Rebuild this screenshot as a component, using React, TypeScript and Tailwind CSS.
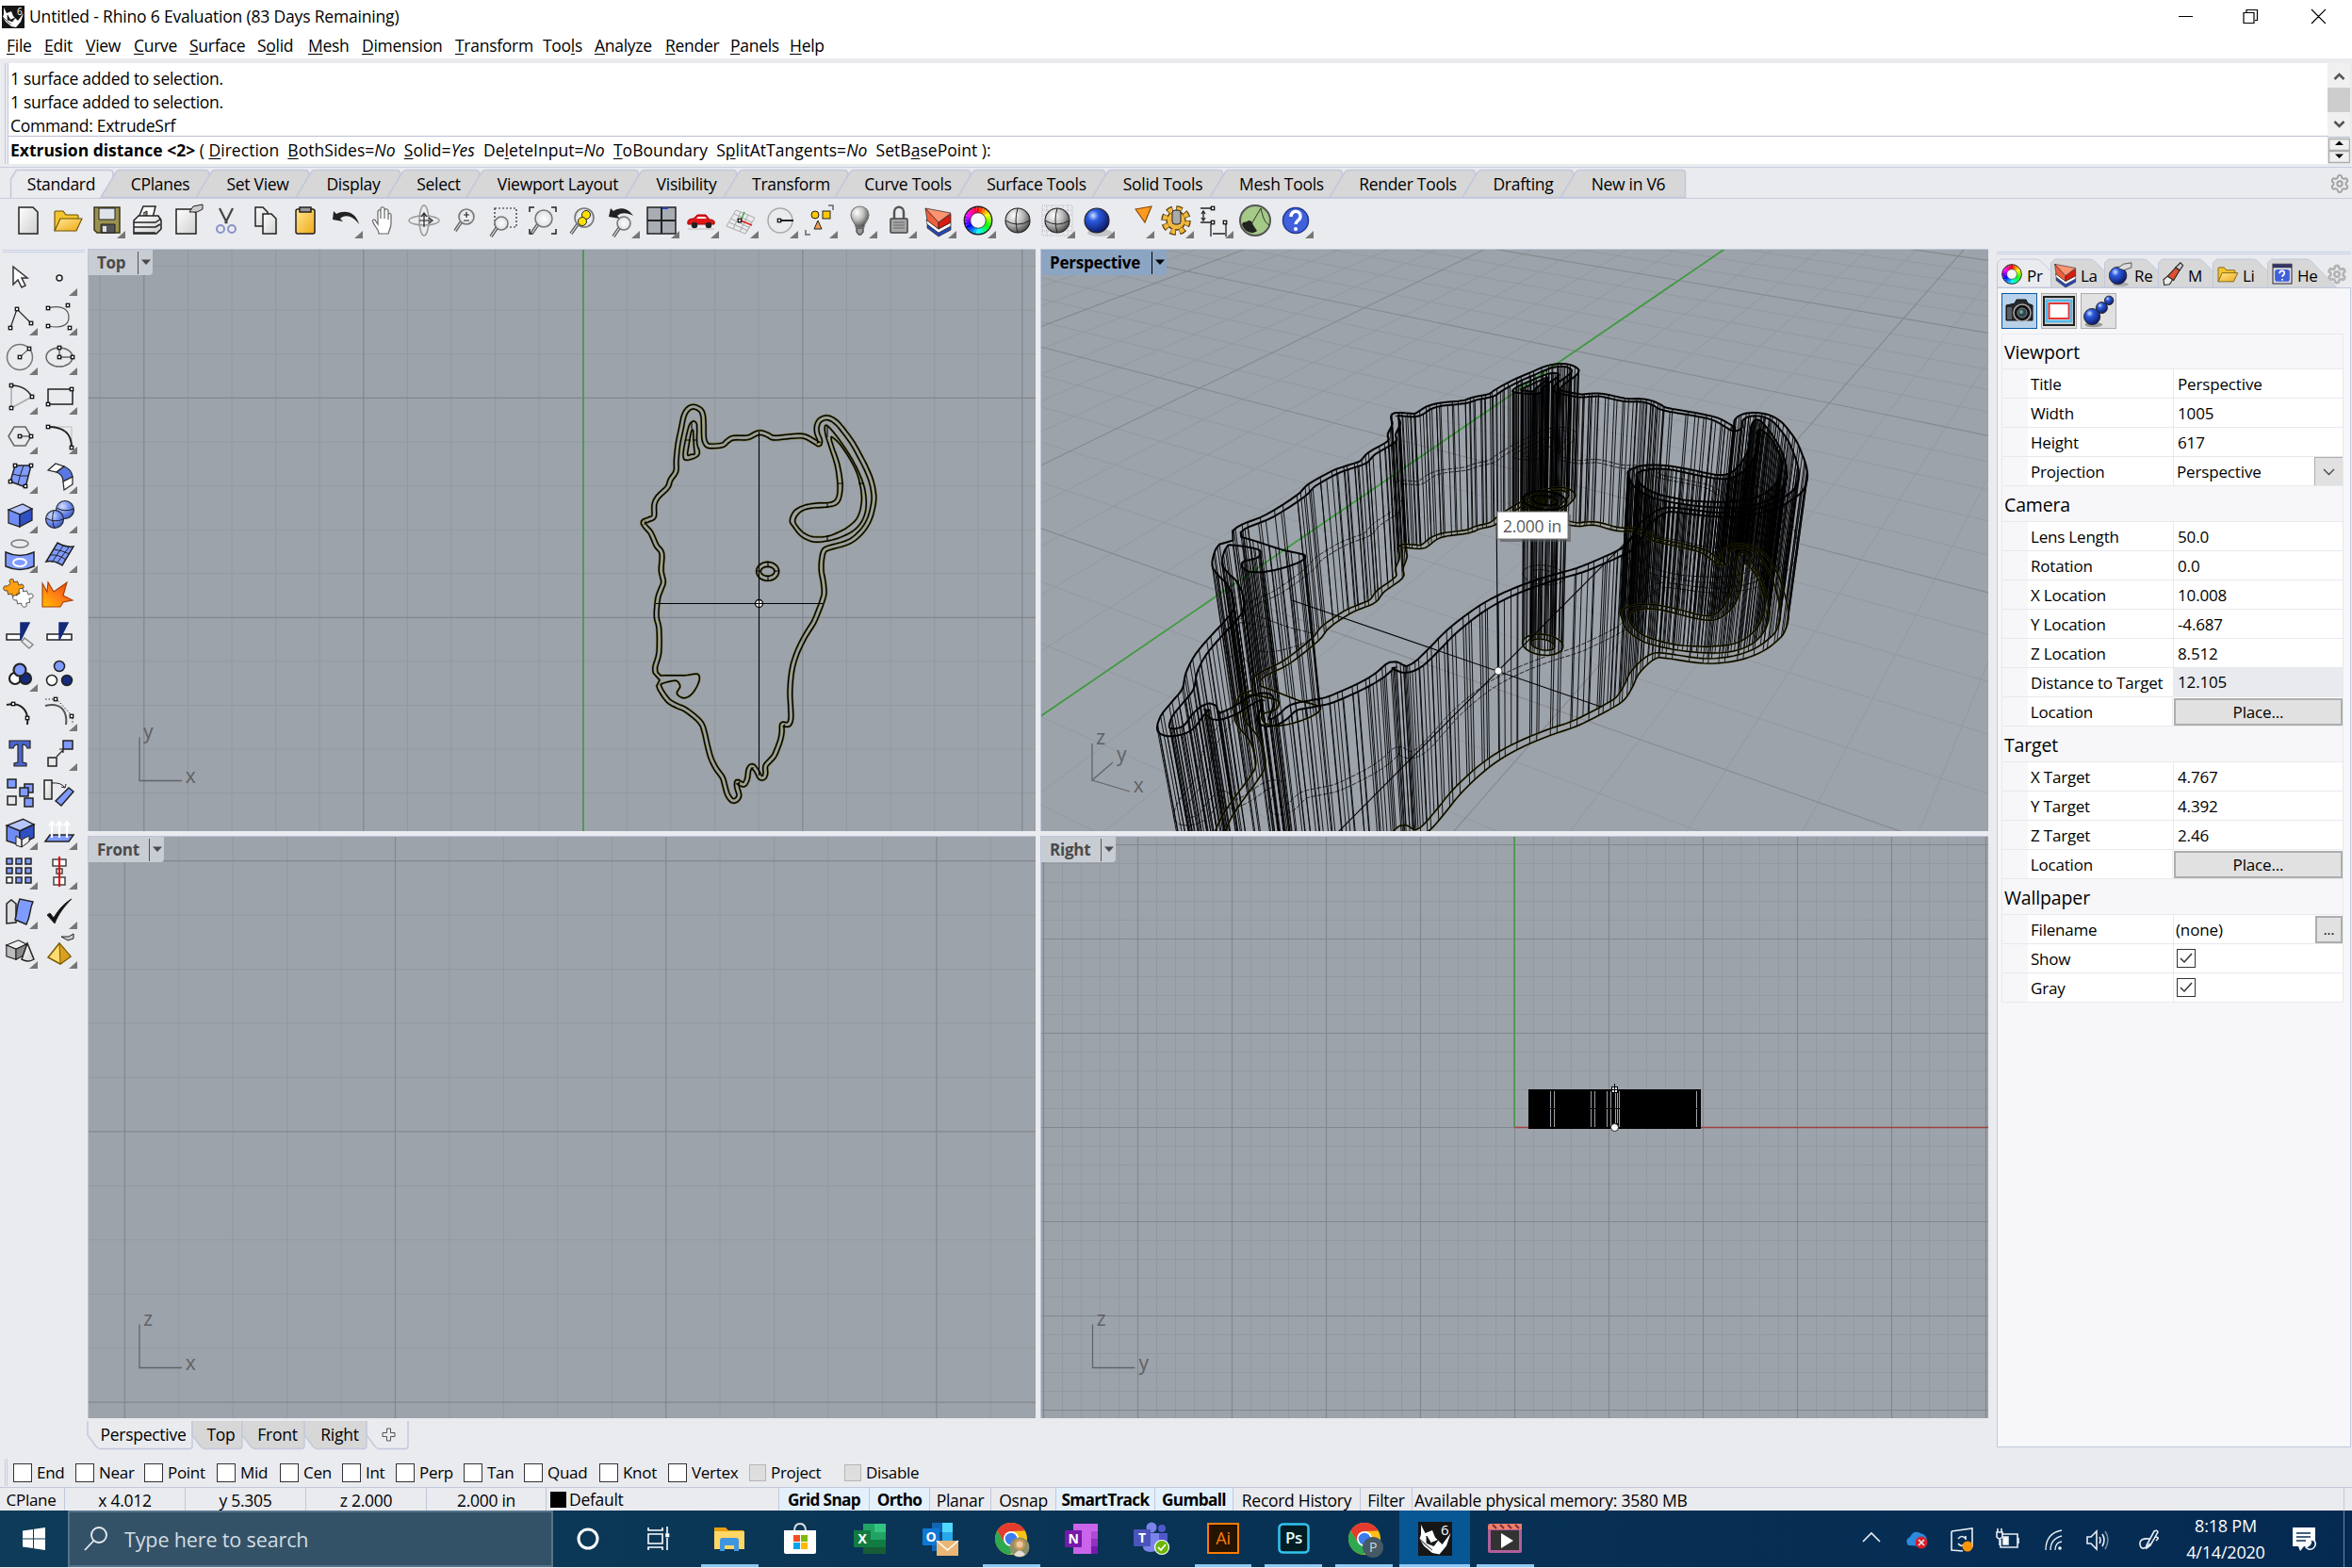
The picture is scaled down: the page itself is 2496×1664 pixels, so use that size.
import React from "react";
import { Settings } from "lucide-react";

type P2 = [number, number];
type P3 = [number, number, number];

/* ---------- outline geometry ---------- */

const OUTLINE: P2[] = [
  [237, 985], [245, 1003], [268, 1034], [295, 1050], [320, 1061], [350, 1083], [373, 1107], [383, 1135], [392, 1175],
  [403, 1215], [420, 1250], [440, 1278], [448, 1305], [456, 1332], [470, 1351], [484, 1350], [493, 1335], [486, 1308],
  [487, 1292], [498, 1298], [510, 1300], [519, 1282], [524, 1252], [535, 1242], [548, 1256], [560, 1278], [572, 1278],
  [577, 1265], [577, 1242], [590, 1226], [604, 1210], [614, 1188], [624, 1160], [629, 1135], [630, 1110], [642, 1110],
  [652, 1108], [658, 1090], [657, 1050], [655, 1010], [658, 960], [666, 915], [682, 870], [705, 825], [730, 785],
  [747, 745], [758, 715], [764, 690], [761, 655], [755, 620], [756, 585], [763, 557], [780, 547], [830, 533],
  [860, 517], [890, 487], [910, 450], [920, 410], [922, 380], [915, 340], [900, 300], [880, 260], [855, 215],
  [830, 180], [805, 150], [785, 136], [768, 133], [750, 141], [741, 158], [741, 180], [750, 205], [747, 217],
  [733, 209], [700, 192], [660, 192], [605, 197], [585, 188], [565, 181], [548, 183], [520, 196], [475, 197],
  [455, 208], [440, 220], [400, 223], [387, 215], [381, 195], [380, 150], [378, 125], [370, 108], [350, 98],
  [332, 104], [318, 125], [308, 170], [298, 220], [293, 270], [292, 303], [275, 330], [265, 355], [235, 385],
  [223, 410], [222, 447], [205, 457], [188, 465], [195, 480], [212, 500], [230, 540], [247, 565], [245, 620],
  [252, 655], [243, 682], [234, 710], [230, 765], [238, 805], [238, 880], [226, 925], [227, 945],
];
const NOSTRIL: P2[] = [
  [244, 954], [275, 953], [320, 953], [350, 949], [363, 950], [367, 965], [358, 990], [340, 1015], [320, 1025],
  [303, 1020], [295, 1008], [305, 990], [300, 976], [290, 970], [265, 974], [246, 980],
];
const EAR_OUT: P2[] = [[346, 144], [357, 150], [359, 170], [359, 215], [367, 242], [358, 258], [325, 268], [315, 255], [320, 215], [333, 160]];
const EAR_IN: P2[] = [[343, 172], [347, 176], [348, 205], [350, 232], [351, 248], [340, 250], [329, 251], [333, 220], [339, 185]];
const HORN_OUT: P2[] = [
  [766, 162], [776, 160], [810, 200], [850, 260], [880, 320], [895, 370], [897, 420], [885, 460], [860, 490],
  [820, 512], [775, 525], [730, 528], [690, 510], [665, 480], [655, 460], [668, 430], [700, 412], [740, 405],
  [785, 402], [803, 387], [807, 350], [800, 290], [785, 240], [769, 190],
];
const HORN_IN: P2[] = [
  [790, 195], [820, 225], [860, 290], [878, 345], [883, 400], [870, 450], [840, 480], [810, 497], [775, 510],
  [730, 512], [700, 500], [680, 480], [671, 460], [685, 436], [715, 422], [775, 417], [805, 408], [818, 385],
  [822, 340], [812, 280], [795, 230], [787, 203],
];
const ring = (cx: number, cy: number, rx: number, ry: number): P2[] =>
  Array.from({ length: 12 }, (_, i) => [cx + rx * Math.cos((i * Math.PI) / 6), cy + ry * Math.sin((i * Math.PI) / 6)] as P2);

function spline(pts: P2[], closed: boolean, n: number): P2[] {
  const out: P2[] = [];
  const L = pts.length;
  const at = (i: number) => (closed ? pts[(i + L) % L] : pts[Math.max(0, Math.min(L - 1, i))]);
  for (let i = 0; i < (closed ? L : L - 1); i++) {
    const [a, b, c, d] = [at(i - 1), at(i), at(i + 1), at(i + 2)];
    for (let k = 0; k < n; k++) {
      const t = k / n;
      const f = (j: 0 | 1) =>
        0.5 * (2 * b[j] + (c[j] - a[j]) * t + (2 * a[j] - 5 * b[j] + 4 * c[j] - d[j]) * t * t + (3 * b[j] - a[j] - 3 * c[j] + d[j]) * t * t * t);
      out.push([f(0), f(1)]);
    }
  }
  if (!closed) out.push(pts[L - 1]);
  return out;
}
function offset(pts: P2[], d: number): P2[] {
  return pts.map((p, i) => {
    const a = pts[Math.max(0, i - 1)];
    const b = pts[Math.min(pts.length - 1, i + 1)];
    const dx = b[0] - a[0];
    const dy = b[1] - a[1];
    const l = Math.hypot(dx, dy) || 1;
    return [p[0] + (dy / l) * d, p[1] - (dx / l) * d] as P2;
  });
}
const mid = spline(OUTLINE, false, 4);
const CURVES: P2[][] = [
  [...offset(mid, -7), [240, 968] as P2],
  [...offset(mid, 7), ...spline(NOSTRIL, false, 4)],
  spline(EAR_OUT, true, 4),
  spline(EAR_IN, true, 4),
  spline(HORN_OUT, true, 6),
  spline(HORN_IN, true, 6),
  spline(ring(584, 622, 36, 30), true, 2),
  spline(ring(584, 622, 22, 15), true, 2),
].map((c) => c.map(([x, y]) => [620 + x / 3, 400 + y / 3] as P2));

const toPath = (pts: P2[], closed = true) =>
  "M" + pts.map(([x, y]) => `${x.toFixed(1)} ${y.toFixed(1)}`).join("L") + (closed ? "Z" : "");

const TOP_PATH = CURVES.map((c) => toPath(c)).join("");

/* ---------- perspective camera ---------- */

const CAM: P3 = [10.008, -4.687, 8.512];
const F: P3 = [-0.43296, 0.75002, -0.49996];
const R: P3 = [0.86605, 0.49994, 0];
const U: P3 = [-0.24995, 0.43299, 0.86601];
const dot = (a: P3, b: P3) => a[0] * b[0] + a[1] * b[1] + a[2] * b[2];
const depth = (p: P3) => dot([p[0] - CAM[0], p[1] - CAM[1], p[2] - CAM[2]], F);
const project = (p: P3): P2 => {
  const v: P3 = [p[0] - CAM[0], p[1] - CAM[1], p[2] - CAM[2]];
  const k = 1286 / dot(v, F);
  return [1607.2 + dot(v, R) * k, 574.7 - dot(v, U) * k];
};
const world = ([x, y]: P2, z: number): P3 => [(x - 618.8) / 46.55, 5 + (656.3 - y) / 46.55, z];
const segment = (a: P3, b: P3): string => {
  let [p, q] = [a, b];
  const near = 0.6;
  const [da, db] = [depth(p), depth(q)];
  if (da < near && db < near) return "";
  if (da < near || db < near) {
    const t = (near - da) / (db - da);
    const m: P3 = [p[0] + (q[0] - p[0]) * t, p[1] + (q[1] - p[1]) * t, p[2] + (q[2] - p[2]) * t];
    if (da < near) p = m;
    else q = m;
  }
  return toPath([project(p), project(q)], false);
};
const level = (z: number) => CURVES.map((c) => toPath(c.map((p) => project(world(p, z))))).join("");
const LEVELS = [level(0), level(1), level(2)];
const WALLS = CURVES.map((c, ci) =>
  c
    .filter((_, i) => ci > 1 || (i * 7 + ci * 3) % 11 < 7)
    .map((p) => segment(world(p, 0), world(p, 2)))
    .join("")
).join("");
let minorGrid = "";
let majorGrid = "";
for (let i = -40; i <= 70; i++) {
  if (i === 0) {
    majorGrid += segment([-70, 0, 0], [70, 0, 0]);
    continue;
  }
  const d = segment([i, -70, 0], [i, 70, 0]) + segment([-70, i, 0], [70, i, 0]);
  if (i % 5 === 0) majorGrid += d;
  else minorGrid += d;
}
const CROSS = segment([0.9, 5.305, 0], [5.38, 5.305, 0]) + segment([4.012, 1.4, 0], [4.012, 9.2, 0]) + segment([4.012, 5.305, 0], [4.012, 5.305, 2]);

const range = (from: number, to: number, step: number) => {
  const r: number[] = [];
  for (let v = from; v <= to; v += step) r.push(v);
  return r;
};

/* ---------- viewports ---------- */

type VP = { x: number; y: number; w: number; h: number; label: string; lw: string; active?: boolean; children: React.ReactNode };
function Viewport({ x, y, w, h, label, lw, active, children }: VP) {
  return (
    <div className="relative overflow-hidden border-l border-t border-[#bcc4d8] bg-[#9da3ab]">
      <svg className="block" width={w} height={h} viewBox={`${x} ${y} ${w} ${h}`}>
        {children}
      </svg>
      <div
        className={`absolute left-0 top-0 flex h-[27px] items-center rounded-br font-bold text-[17px] tracking-[-0.25px] ${lw} ${
          active ? "bg-[#8ca5c3] text-black" : "bg-[#c8ccd3] text-[#4a4a4a]"
        }`}
      >
        <span className="flex-1 pl-[9px]">{label}</span>
        <span className={`flex h-[24px] w-[16px] items-center justify-center border-l ${active ? "border-black" : "border-[#555]"}`}>
          <svg width="12" height="7" viewBox="0 0 12 7">
            <path d="M1 0.5h10l-5 5.5z" fill={active ? "#000" : "#4a4a4a"} />
          </svg>
        </span>
      </div>
    </div>
  );
}
const Grid = ({ box, x0, y0, step, skip }: { box: number[]; x0: number; y0: number; step: number; skip: number }) => {
  const [l, t, r, b] = box;
  let minor = "";
  let major = "";
  range(-60, 60, 1).forEach((i) => {
    const x = x0 + i * step;
    const y = y0 + i * step;
    let d = "";
    if (x > l && x < r) d += `M${x.toFixed(1)} ${t}V${b}`;
    if (y > t && y < b) d += `M${l} ${y.toFixed(1)}H${r}`;
    if (i % skip === 0) major += d;
    else minor += d;
  });
  return (
    <>
      <path d={minor} stroke="#9299a1" fill="none" />
      <path d={major} stroke="#83868f" fill="none" strokeWidth="1.2" />
    </>
  );
};
const Gnomon = ({ x, y, up, right }: { x: number; y: number; up: string; right: string }) => (
  <g>
    <path d={`M${x} ${y - 46}V${y}H${x + 45}`} stroke="#626468" strokeWidth="1.3" fill="none" />
    <g fill="#5f6165" fontSize="21" textAnchor="middle">
      <text x={x + 9} y={y - 45}>{up}</text>
      <text x={x + 54} y={y + 2}>{right}</text>
    </g>
  </g>
);

/* ---------- icons ---------- */

const K = "#222";
const Ico = ({ children, tri = false, s = 42 }: { children: React.ReactNode; tri?: boolean; s?: number }) => (
  <svg width={s} height={s} viewBox="-21 -21 42 42" fill="none" stroke={K} strokeWidth="1.5" className="shrink-0 overflow-visible">
    {children}
    {tri && <path d="M19 11v8h-9z" fill="#777" stroke="none" />}
  </svg>
);
const Sq = ({ p }: { p: P2[] }) => (
  <>
    {p.map(([x, y], i) => (
      <rect key={i} x={x - 1.7} y={y - 1.7} width="3.4" height="3.4" fill="#fff" stroke="#111" strokeWidth="1.3" />
    ))}
  </>
);
const Wheel = ({ r = 11.5, w = 6.5 }) => (
  <g>
    {range(0, 23, 1).map((i) => {
      const a = ((i * 15 - 98) * Math.PI) / 180;
      const b = ((i * 15 - 82) * Math.PI) / 180;
      return (
        <path key={i} d={`M${r * Math.cos(a)} ${r * Math.sin(a)}L${r * Math.cos(b)} ${r * Math.sin(b)}`} stroke={`hsl(${i * 15} 100% 50%)`} strokeWidth={w} />
      );
    })}
    <circle r={r + w / 2} stroke="#222" strokeWidth="1.3" />
    <circle r={r - w / 2} stroke="#222" strokeWidth=".8" fill="#f7f7f9" />
  </g>
);
const Layers = () => (
  <g strokeWidth=".7" strokeLinejoin="round">
    <path d="M-12 4L0 13 13 6v4L0 17-12 8z" fill="#2748b8" />
    <path d="M-13-1L0 9 13 2v4L0 13-12 4z" fill="#fff" />
    <path d="M-14-13L0 2v7L-12 0z" fill="#f0603c" />
    <path d="M0 2l13-9v9L0 9z" fill="#d81c10" />
    <path d="M-14-13L13-8 0 2z" fill="#ff9470" />
  </g>
);
const Lens = ({ x = 3, y = -4, r = 8 }) => (
  <g>
    <path d={`M${x - r * 0.7} ${y + r * 0.7}L${x - r - 4} ${y + r + 7}`} stroke="#555" strokeWidth="3.6" />
    <path d={`M${x - r * 0.7} ${y + r * 0.7}L${x - r - 4} ${y + r + 7}`} stroke="#ddd" strokeWidth="1.3" />
    <circle cx={x} cy={y} r={r} fill="url(#glass)" stroke="#777" strokeWidth="1.6" />
  </g>
);
const Ball = ({ cx = 0, cy = 0, r = 13, g = "gray" }) => (
  <circle cx={cx} cy={cy} r={r} fill={g === "gray" ? "url(#grayBall)" : g === "navy" ? "url(#blueBall)" : "url(#lightBall)"} stroke="#222" strokeWidth="1.1" />
);
const Folder = () => (
  <g strokeWidth="1.1" stroke="#6b5200">
    <path d="M-14 11V-9q0-1 1-1h8l3 4h12q1 0 1 1v5" fill="#f4c430" />
    <path d="M-14 11l6-13h23l-6 13z" fill="url(#gold)" />
  </g>
);
const Cube = ({ x = 0, y = 0, s = 1, c = ["#b6c5ff", "#6f8cf5", "#2f4fc4"] }) => (
  <g transform={`translate(${x} ${y}) scale(${s})`} strokeWidth="1.3">
    <path d="M-12-6L3-12l10 5-13 6z" fill={c[0]} />
    <path d="M-12-6L0-1v13l-12-4z" fill={c[1]} />
    <path d="M0-1l13-6V5L0 12z" fill={c[2]} />
  </g>
);

const TOOLBAR: [React.ReactNode, boolean][] = [
  [<path d="M-10-14H5l5 5V14h-20z" fill="url(#paper)" />, false],
  [<Folder />, false],
  [<g><path d="M-14-14h27v27h-24l-3-3z" fill="#9a9150" stroke="#3b3716" /><path d="M-9-13h17v12H-9z" fill="#dfe3ea" strokeWidth="1" /><path d="M-7 4H8v9H-7z" fill="#555" strokeWidth="1" /><path d="M-5 6h4v6h-4z" fill="#ddd" stroke="none" /></g>, true],
  [<g><path d="M-9-3l5-12h13l-3 12z" fill="#fff" /><path d="M-4-8l4-2v5l-5 1" fill="#888" strokeWidth="1" /><path d="M-14 0l5-5h21l3 5v9l-5 5h-24z" fill="url(#paper)" /><path d="M-14 2H9l6-4M-14 7H9l5-3M-14 13H9" /></g>, false],
  [<g><path d="M-11-12H6l4 4V14h-21z" fill="url(#paper)" /><path d="M3-9l4-6 10-2v5l-6 3z" fill="#ccc" strokeWidth="1" /></g>, false],
  [<g><path d="M-7-13l8 16M7-13L-1 3" stroke="#444" strokeWidth="2.2" /><circle cx="-6" cy="9" r="4" stroke="#8794c8" strokeWidth="2" /><circle cx="6" cy="9" r="4" stroke="#8794c8" strokeWidth="2" /></g>, false],
  [<g fill="url(#paper)"><path d="M-11-14h8l5 5V6h-13z" /><path d="M-3-7h9l5 5v16H-3z" /></g>, false],
  [<g><rect x="-10" y="-12" width="20" height="26" rx="2" fill="url(#gold)" /><path d="M-6-14H6v5H-6z" fill="#999" /></g>, false],
  [<g><path d="M-13-1l1-9 3 3C0-12 12-9 15 4 9-5 0-7-5-2l3 3z" fill="#222" stroke="none" /></g>, true],
  [<path d="M-6 14c0-5-5-8-6-12-2-3 2-4 3-1l2 3V-9c0-3 3-3 3 0v7-10c0-3 4-3 4 0v10-8c0-3 4-3 4 0v9-5c0-2 3-2 3 0v9c0 5-2 7-3 11z" fill="#fff" stroke="#666" strokeWidth="1.2" />, false],
  [<g stroke="#999"><ellipse rx="5" ry="16" /><ellipse rx="16" ry="5" /><path d="M0-7v14M-5 0h12M-3-4l3-4 3 4M5-3l4 3-4 3" stroke="#222" strokeWidth="1.2" /></g>, false],
  [<g><Lens /><path d="M0-6h6M3-9v6M0 0h6" strokeWidth="1.2" /></g>, false],
  [<g><path d="M-9-13h23v20H-9z" strokeDasharray="2 2" strokeWidth="1.2" /><Lens x={-2} y={3} r={7} /></g>, false],
  [<g><Lens x={1} y={-2} r={9} /><path d="M-14-9v-5h5M9-14h5v5M14 9v5H9M-14 9v5h3" /></g>, false],
  [<g><Lens x={2} y={-3} r={10} /><circle cx="4" cy="-6" r="4.5" fill="#ffe000" strokeWidth="1" /><circle cx="0" cy="1" r="4.500" fill="#ffe000" strokeWidth="1" /></g>, false],
  [<g><path d="M-14-4l2-9 3 3c7-5 16-3 21 5-6-3-12-4-17 0l3 3z" fill="#222" stroke="none" /><Lens x={2} y={3} r={7} /></g>, true],
  [<g><rect x="-15" y="-14" width="30" height="28" fill="#a8acb3" stroke="#222" /><path d="M0-14v28M-15 0h30" strokeWidth="2" /><path d="M1-13h6" stroke="#24c" strokeWidth="2" /></g>, true],
  [<g><path d="M-14 4c-1-5 2-6 6-6l4-4h9l4 5c4 0 6 1 5 5z" fill="#e01818" stroke="#a00" strokeWidth="1" /><path d="M-3-4h7l2 2H-5z" fill="#fff" stroke="none" /><circle cx="-7" cy="5" r="2.500" fill="#222" /><circle cx="8" cy="5" r="2.500" fill="#222" /><path d="M-14 9h28" stroke="#ccc" /></g>, true],
  [<g><path d="M-15 6L-5-11 15-3 5 14zM-10-2L10 8M-12 2l20 9M-7-7l19 9M0-9L-8 9M8-6L-1 12" stroke="#aaa" strokeWidth="1" /><path d="M0 0l12 5" stroke="#d22" strokeWidth="1.800" /><path d="M0 0l4-9" stroke="#3a3" /><Sq p={[[-1, 0]]} /></g>, true],
  [<g><circle r="13" stroke="#aaa" /><path d="M0 0h14" strokeWidth="2" /><Sq p={[[-1, 0]]} /></g>, true],
  [<g><circle cx="-5" cy="-6" r="4" fill="#ffc800" strokeWidth="1" /><rect x="3" y="-10" width="8" height="8" fill="#ffc800" strokeWidth="1" /><path d="M-6 9l4-9 4 9z" fill="#f0a050" strokeWidth="1" /><path d="M9-16h5v5M-15 10v5h5" stroke="#666" /></g>, true],
  [<g><path d="M-4 7c0-5-5-7-5-13a9.500 9 0 0 1 19 0c0 6-5 8-5 13z" fill="url(#grayBall)" stroke="#777" strokeWidth="1.200" /><path d="M-3 8h7v4l-2.500 3h-2L-3 12z" fill="#999" stroke="#555" /></g>, true],
  [<g><path d="M-5-2v-7c0-7 10-7 10 0v7" stroke="#555" strokeWidth="2.500" /><rect x="-9" y="-2" width="18" height="15" rx="1" fill="#a8a8a8" stroke="#444" /><path d="M-6 2H6M-6 5H6M-6 8H6" stroke="#666" strokeWidth="1" /></g>, true],
  [<Layers />, true],
  [<Wheel />, true],
  [<g><Ball /><path d="M-13 0q13 8 26 0M0-13q-4 13 0 26" strokeWidth="1" /></g>, false],
  [<g><path d="M-16-16H16V16H-16zM-16-11H16M-16-6H16M-16 6H16M-16 11H16M-11-16V16M-6-16V16M6-16V16M11-16V16" stroke="#aaa" strokeWidth=".8" strokeDasharray="1 1" /><Ball /><path d="M-13 0q13 8 26 0M0-13q-4 13 0 26" strokeWidth="1" /></g>, true],
  [<g><ellipse cx="3" cy="13" rx="13" ry="4" fill="#c4c4c8" stroke="none" /><Ball g="navy" /></g>, true],
  [<path d="M-1-12L16-15 9 2z" fill="#ff9a20" stroke="#8a4a00" strokeWidth="1.200" />, true],
  [<g><circle r="12.500" stroke="#5a3a00" strokeWidth="6.500" strokeDasharray="6 3.800" /><circle r="10" fill="#f0b840" stroke="#5a3a00" strokeWidth="1.300" /><circle r="12" stroke="#f0b840" strokeWidth="5" strokeDasharray="4.500 4.920" strokeDashoffset="-.7" /><rect x="-4" y="-11" width="9" height="15" rx="3" fill="#aaa" strokeWidth="1" /></g>, true],
  [<g strokeWidth="1.300"><path d="M-16-13h12M-16 2h12M-13-10v9M-5 4v13M11 4v13M-3 14h13" /><path d="M-15-7l2-3 2 3M-15-3l2 3 2-3" /><Sq p={[[-3, -13], [-3, 2], [10, 2]]} /></g>, true],
  [<g><circle r="16" fill="#a5c987" stroke="#555" strokeWidth="2" /><path d="M-14 4c2-4 4-1 7-4 4 0 4 3 5 5l4 6c-6 5-14 0-16-7z" fill="#222" stroke="none" /><path d="M-4 4L6-13M6-13c2 8 3 14 9 18" strokeWidth=".9" /></g>, false],
  [<g><circle r="13.500" fill="#4060dc" stroke="#223a90" /><path d="M-5-4c0-8 11-7 10 0C5 0 0 0 0 4" stroke="#fff" strokeWidth="3.500" /><circle cx="0" cy="9" r="2" fill="#fff" stroke="none" /></g>, true],
];

const B1 = "#7f9bff";
const PUZZLE = "M-6-8q-3-5 1-6t3 4l5-1 2 5q5-3 6 1t-5 4l1 5-5 1q2 5-2 5t-4-5l-5 1-1-5q-5 1-5-3t5-3z";
const SIDE: [React.ReactNode, boolean][] = [
  [<path d="M-7-12v19l5-5 4 8 4-2-4-8h6z" fill="#fff" stroke="#333" />, false],
  [<circle r="3" fill="#fff" />, true],
  [<g><path d="M-10 11L-3-9 12 6" strokeWidth="1.200" /><Sq p={[[-10, 11], [-3, -9], [12, 6]]} /></g>, true],
  [<g><path d="M-12-10C4-14 10-8 10 0S2 12-12 9" stroke="#555" strokeWidth="1.200" /><Sq p={[[-12, -10], [9, -13], [-12, 9], [11, 11]]} /></g>, true],
  [<g><circle r="13.500" stroke="#777" /><path d="M0 0l10-9" strokeWidth="1" /><Sq p={[[0, 0], [10, -9]]} /></g>, true],
  [<g><ellipse rx="14" ry="10" stroke="#666" /><path d="M0-10V0h14" strokeWidth="1" /><Sq p={[[0, -10], [0, 0], [14, 0]]} /></g>, true],
  [<g><path d="M-9-12C2-12 8-8 13 0" /><path d="M-9-12v24L13 0" stroke="#aaa" /><Sq p={[[-9, -12], [-9, 12], [13, 0]]} /></g>, true],
  [<g><path d="M-12-8h26V8h-26z" /><Sq p={[[-12, 8], [13, -8]]} /></g>, true],
  [<g><path d="M-12 0l6-10H6l6 10-6 10H-6z" stroke="#666" /><path d="M0 0h11" strokeWidth="1" /><Sq p={[[0, 0], [12, 0]]} /></g>, true],
  [<g><path d="M-12-10h25v22" stroke="#bbb" strokeWidth="1" /><path d="M-12-10C4-10 13-4 13 12" strokeWidth="2" /><Sq p={[[-12, -10], [13, 12]]} /></g>, true],
  [<g><path d="M-5-11H12L6 12-10 6z" fill={B1} /><path d="M4-11q-4 10-6 20M-8-2q9 3 17 2" strokeWidth="1" /><Sq p={[[-5, -11], [12, -11], [-10, 6], [6, 11]]} /></g>, true],
  [<g strokeWidth="1.200"><path d="M-12-6l8-7 9 3-8 6z" fill="#fff" /><path d="M-3-4l8-6q8 3 9 11l-10 5q0-7-7-10z" fill="#5a78e4" /><path d="M4 6l10-5v8L5 15z" fill="#fff" /></g>, true],
  [<Cube />, true],
  [<g><Ball cx={6} cy={-6} r={9.5} g="light" /><Ball cx={-5} cy={4} r={9.5} g="light" /><path d="M-14 3q9 5 18 1M-6-5q-3 9 1 19M-3-8q9 5 18 1" strokeWidth="1" /></g>, true],
  [<g><ellipse cy="-12" rx="9" ry="4" stroke="#777" /><path d="M-15-3q15 7 30 0V12q-15 7-30 0z" fill={B1} /><ellipse cy="8" rx="7" ry="4" stroke="#fff" strokeWidth="2" /></g>, true],
  [<g><path d="M-14 7L-2-13q8 5 17 4L3 11q-9-6-17-4z" fill={B1} /><path d="M-10 0q9-1 17 5M-6-6q9 1 17 5M-8 8L4-10M-3 9L10-8" strokeWidth="1" /></g>, true],
  [<g strokeWidth=".9"><g transform="translate(-5 -5) scale(.82)"><path d={PUZZLE} fill="#ffa010" /></g><g transform="translate(5 5) scale(.82)"><path d={PUZZLE} fill="#fff" /></g></g>, false],
  [<path d="M-18 13V-12l5 9 1-10 6 10L8-13 4 1l10 5L4 8l-3 5z" fill="url(#fire)" stroke="#a63c00" strokeWidth="1.100" />, false],
  [<g><path d="M-14 0H1v6h-15z" fill="#fff" /><path d="M1-12h9L1 6z" fill="#142a7a" stroke="#142a7a" /><path d="M5 4l9 7-4 4-8-7z" stroke="#888" /></g>, false],
  [<g><path d="M-13 0h26v6h-26z" fill="#fff" /><path d="M0-12h9L0 6z" fill="#142a7a" stroke="#142a7a" /></g>, false],
  [<g strokeWidth="2.200"><circle cx="-5" cy="5" r="6" fill="#fff" /><circle cx="6" cy="5" r="6" fill="#142a7a" /><circle cx="0" cy="-4" r="6.500" fill={B1} /></g>, true],
  [<g><circle cx="0" cy="-8" r="5.500" fill={B1} /><circle cx="-8" cy="7" r="5.500" fill="#fff" /><circle cx="8" cy="7" r="5.500" fill="#142a7a" /></g>, false],
  [<g><path d="M-14-9C0-12 10-5 8 12" strokeWidth="2" /><Sq p={[[-7, -10], [8, 5]]} /></g>, false],
  [<g><path d="M-15-8C0-12 9-4 7 12" stroke="#555" strokeWidth="2" /><path d="M-15-15h12l17 18v9" strokeDasharray="1.500 2" strokeWidth="1" /><Sq p={[[-4, -15], [13, 3]]} /></g>, true],
  [<path d="M-11-13h22v8l-3 0c-1-3-2-4-5-4V10l4 1v3H-6v-3l4-1V-9c-3 0-4 1-5 4l-4 0z" fill="#4a66cc" stroke="#222" strokeWidth="1.200" />, false],
  [<g><path d="M4-13h10v9H4z" fill={B1} /><path d="M-12 5h9v9h-9z" fill="#e8e8e8" /><path d="M-3 4L4-3M0-4l4 0 0 4" strokeWidth="1.200" /></g>, true],
  [<g fill={B1}><rect x="-13" y="-14" width="9" height="9" /><rect x="-13" y="4" width="9" height="9" fill="#e8e8e8" /><rect x="5" y="-9" width="9" height="9" /><rect x="0" y="-5" width="9" height="9" /><rect x="5" y="6" width="9" height="9" /></g>, false],
  [<g><path d="M-16-13h8V7h-8z" fill="url(#paper)" /><path d="M-8-10Q2-11 6-5M2-6l4 1 1-4" strokeWidth="1" /><path d="M-4 9L10-5l5 4L2 14z" fill={B1} /></g>, false],
  [<g><Cube s={1.15} /><path d="M-4 4l6 4v8l-6-2zM2 8l8-4v6l-8 6z" fill="#eee" strokeWidth="1" /></g>, true],
  [<g><path d="M-15 10l5-7h25l-5 7z" fill={B1} /><path d="M-8 6v-17M0 6v-17M8 6v-17M-11-7l3-4 3 4M-3-7l3-4 3 4M5-7l3-4 3 4" stroke="#fff" strokeWidth="2.200" /></g>, true],
  [<g>{[-11, -1, 9].map((x) => [-11, -1, 9].map((y) => <rect key={`${x}${y}`} x={x - 3} y={y - 3} width="6" height="6" fill={x < -5 && y > 5 ? "#fff" : B1} />))}</g>, true],
  [<g><path d="M-7-13H7v7H-7zM-3-3h6v5h-6zM-6 6H6v8H-6z" fill="#fff" stroke="#444" /><path d="M0-16v32" stroke="#e01010" strokeWidth="2.200" /></g>, true],
  [<g><path d="M-14-8l5-4 5 4v20l-10 1z" fill="#ddd" /><path d="M-5 9C-2 0-4-5 0-13l14 3C10-2 12 4 7 14z" fill={B1} /></g>, true],
  [<path d="M-13 4l3-2 4 5C0-3 6-9 13-13 5-5-1 3-5 13z" fill="#111" strokeWidth="1" />, true],
  [<g><Cube x={-4} y={-1} s={0.85} c={["#eee", "#bbb", "#888"]} /><path d="M2 9L8-8l7 17q-6 4-13 0z" fill="url(#paper)" /></g>, true],
  [<g><path d="M-12 7L0-8 12 6 1 14z" fill="#ffdc70" stroke="#7a5a00" /><path d="M0-8l1 22L12 6z" fill="#d8a020" stroke="#7a5a00" strokeWidth="1" /><path d="M2-15h8l5-3v5l-6 2z" fill="#ccc" strokeWidth="1" /></g>, true],
];

const RhinoLogo = ({ w, h }: { w: number; h: number }) => (
  <svg width={w} height={h} viewBox="0 0 24 24" preserveAspectRatio="none" className="shrink-0">
    <rect width="24" height="24" fill="#161616" />
    <path d="M2 2l3 6 5-2 2 5 5 5 6-8-3 9-5 6-5-1-6-5-3-5 1-3z" fill="#fff" />
    <path d="M6 10l3 5 5-2-3 4-5-2zM1 12l4 4 5 4" fill="#161616" stroke="#161616" strokeWidth=".6" />
    <text x="16" y="9.500" fontSize="10" fill="#fff">6</text>
  </svg>
);

/* ---------- chrome ---------- */

const MENU: [string, number, string][] = [
  ["File", 0, "w-[40px]"], ["Edit", 0, "w-[44px]"], ["View", 0, "w-[51px]"], ["Curve", 0, "w-[59px]"], ["Surface", 0, "w-[72px]"],
  ["Solid", 1, "w-[54px]"], ["Mesh", 0, "w-[57px]"], ["Dimension", 0, "w-[99px]"], ["Transform", 0, "w-[93px]"], ["Tools", 3, "w-[55px]"],
  ["Analyze", 0, "w-[75px]"], ["Render", 0, "w-[69px]"], ["Panels", 0, "w-[63px]"], ["Help", 0, "w-[50px]"],
];
const Hot = ({ t, i }: { t: string; i: number }) => (
  <>
    {t.slice(0, i)}
    <span className="underline underline-offset-2">{t[i]}</span>
    {t.slice(i + 1)}
  </>
);

const TABS: [string, string, number][] = [
  ["Standard", "w-[109px]", 109], ["CPlanes", "w-[101px]", 101], ["Set View", "w-[106px]", 106], ["Display", "w-[97px]", 97],
  ["Select", "w-[84px]", 84], ["Viewport Layout", "w-[169px]", 169], ["Visibility", "w-[104px]", 104], ["Transform", "w-[118px]", 118],
  ["Curve Tools", "w-[130px]", 130], ["Surface Tools", "w-[143px]", 143], ["Solid Tools", "w-[125px]", 125], ["Mesh Tools", "w-[127px]", 127],
  ["Render Tools", "w-[141px]", 141], ["Drafting", "w-[104px]", 104], ["New in V6", "w-[119px]", 119],
];
const TopTab = ({ t, w, n, on }: { t: string; w: string; n: number; on: boolean }) => (
  <div className={`relative flex h-[30px] items-center justify-center ${w}`}>
    <svg className="absolute bottom-0 right-0 overflow-visible" width={n + 14} height="30">
      <path
        d={on ? `M14.500 30V10l6-9.500h${n - 10}q3.500 0 3.500 3.500V30` : `M1 29.500L17 3q1.500-2.500 4-2.500h${n - 10}q3.500 0 3.500 3.500v25.500z`}
        fill={on ? "#eaebef" : "#d7d7d7"}
        stroke="#c2c8dc"
        strokeWidth="1.5"
      />
    </svg>
    <span className="relative whitespace-nowrap pr-[1px] pt-[2px]">{t}</span>
  </div>
);

const OSNAP: [string, string][] = [
  ["End", "w-[66px]"], ["Near", "w-[73px]"], ["Point", "w-[77px]"], ["Mid", "w-[67px]"], ["Cen", "w-[66px]"], ["Int", "w-[57px]"],
  ["Perp", "w-[72px]"], ["Tan", "w-[64px]"], ["Quad", "w-[80px]"], ["Knot", "w-[73px]"], ["Vertex", "w-[86px]"],
  ["Project", "w-[101px]"], ["Disable", "w-[100px]"],
];
const STATUS: [string, string, boolean][] = [
  ["Grid Snap", "w-[96px]", true], ["Ortho", "w-[64px]", true], ["Planar", "w-[65px]", false], ["Osnap", "w-[69px]", false],
  ["SmartTrack", "w-[105px]", true], ["Gumball", "w-[83px]", true], ["Record History", "w-[135px]", false], ["Filter", "w-[55px]", false],
];

type Row = [string, React.ReactNode];
const Val = ({ children }: { children: React.ReactNode }) => <span className="pl-[4px]">{children}</span>;
const Place = (
  <button className="ml-px h-[29px] w-[179px] border-2 border-[#adadad] bg-[#e1e1e1] text-center leading-none">Place...</button>
);
const Check = (
  <span className="ml-[3px] mb-px flex h-[20px] w-[20px] items-center justify-center border-[1.5px] border-[#333] bg-white">
    <svg width="16" height="16" viewBox="0 0 16 16" fill="none" stroke="#333" strokeWidth="1.5"><path d="M2 8l4 4 8-9" /></svg>
  </span>
);
const GROUPS: [string, Row[]][] = [
  ["Viewport", [
    ["Title", <Val>Perspective</Val>],
    ["Width", <Val>1005</Val>],
    ["Height", <Val>617</Val>],
    ["Projection", <><span className="pl-[3px]">Perspective</span><span className="ml-auto flex h-[30px] w-[30px] items-center justify-center border-l border-t border-[#adadad] bg-[#e1e1e1]"><svg width="13" height="8" fill="none" stroke="#444" strokeWidth="1.3"><path d="M1 1l5.500 5.500L12 1" /></svg></span></>],
  ]],
  ["Camera", [
    ["Lens Length", <Val>50.0</Val>], ["Rotation", <Val>0.0</Val>], ["X Location", <Val>10.008</Val>], ["Y Location", <Val>-4.687</Val>],
    ["Z Location", <Val>8.512</Val>],
    ["Distance to Target", <div className="h-full w-full bg-[#e9eaef] leading-[29px]"><Val>12.105</Val></div>],
    ["Location", Place],
  ]],
  ["Target", [["X Target", <Val>4.767</Val>], ["Y Target", <Val>4.392</Val>], ["Z Target", <Val>2.46</Val>], ["Location", Place]]],
  ["Wallpaper", [
    ["Filename", <><span className="pl-[2px]">(none)</span><span className="ml-auto flex h-[29px] w-[29px] items-center justify-center border-2 border-[#adadad] bg-[#e1e1e1] text-[15px] leading-none">...</span></>],
    ["Show", Check],
    ["Gray", Check],
  ]],
];

const PANEL_TABS: [string, React.ReactNode, string, number][] = [
  ["Pr", <Wheel r={11} w={7} />, "w-[57px]", 57],
  ["La", <g transform="scale(1.15)"><Layers /></g>, "w-[57px]", 57],
  ["Re", <g><ellipse cx="2" cy="15" rx="12" ry="3" fill="#aaa" stroke="none" /><Ball g="navy" cx={-2} cy={2} r={13} /><path d="M-2-9l8-6 12-2v7l-11 4z" fill="#ddd" strokeWidth="1" /></g>, "w-[57px]", 57],
  ["M", <g><path d="M-14 8l6-5 8 4-5 8-8 1z" fill="#eee" /><path d="M-8 3L4-10l6 4L1 9z" fill="#e05030" /><path d="M4-10l7-7 4 4-5 7z" fill="#ccc" /></g>, "w-[58px]", 58],
  ["Li", <Folder />, "w-[58px]", 58],
  ["He", <g><rect x="-14" y="-15" width="28" height="29" fill="#ddd" stroke="#334" /><path d="M-14-12h28" stroke="#336" strokeWidth="5" /><rect x="-11" y="-7" width="22" height="18" rx="4" fill="#3e60dc" stroke="none" /><path d="M-4-1c0-6 8-5 7 0 0 3-3 2-3 5M0 7v2" stroke="#fff" strokeWidth="2.500" /></g>, "w-[72px]", 72],
];

const Chrome = ({ children }: { children: React.ReactNode }) => (
  <svg width="40" height="40" viewBox="-20 -20 40 40">
    <circle r="17" fill="#fbc116" />
    <path d="M-14.700-8.500A17 17 0 0 1 14.700-8.500L0-8-7 4z" fill="#e33b2e" />
    <path d="M-14.700-8.500A17 17 0 0 0-1 17L7 4-7 4z" fill="#2da94f" />
    <circle r="8" fill="#fff" />
    <circle r="6.300" fill="#3b7cf0" />
    {children}
  </svg>
);
const APPS: [React.ReactNode, boolean, boolean][] = [
  [<svg width="30" height="30"><circle cx="15" cy="15" r="10" fill="none" stroke="#fff" strokeWidth="3" /></svg>, false, false],
  [<svg width="28" height="28" fill="none" stroke="#fff" strokeWidth="1.6"><path d="M3 2v3h15V2M3 26v-3h15v3M3 9h15v10H3zM23 1v7M23 13v13" /><rect x="22" y="9" width="2.500" height="2.500" fill="#fff" /></svg>, false, false],
  [<svg width="34" height="30"><path d="M1 3h12l3 3h16v6H1z" fill="#e8a010" /><path d="M1 7h32v19H1z" fill="#ffd765" /><path d="M7 28V17q0-3 3-3h14q3 0 3 3v11h-5v-6H12v6z" fill="#3f96e0" /></svg>, true, false],
  [<svg width="36" height="36"><path d="M12 10q0-8 6-8t6 8" fill="none" stroke="#ddd" strokeWidth="2" /><path d="M1 9h34v23q0 2-2 2H3q-2 0-2-2z" fill="#fff" /><path d="M11 14h7v7h-7z" fill="#f25022" /><path d="M19 14h7v7h-7z" fill="#7fba00" /><path d="M11 22h7v7h-7z" fill="#00a4ef" /><path d="M19 22h7v7h-7z" fill="#ffb900" /></svg>, false, false],
  [<svg width="36" height="34"><path d="M10 1h12v32H10z" fill="#21a366" /><path d="M22 1h12v9H22z" fill="#33c481" /><path d="M22 10h12v8H22z" fill="#21a366" /><path d="M10 18h24v8H10z" fill="#107c41" /><path d="M10 26h24v7H10z" fill="#185c37" /><rect x="0" y="8" width="18" height="18" rx="1" fill="#107c41" /><text x="9" y="22" fontSize="14" fontWeight="700" fill="#fff" textAnchor="middle">X</text></svg>, false, false],
  [<svg width="40" height="38"><path d="M10 2h22v30H10z" fill="#1066b5" /><path d="M21 2h11v10H21z" fill="#50d9ff" /><path d="M10 12h11v10H10z" fill="#0a4a8a" /><path d="M21 12h11v12H21z" fill="#28a8ea" /><rect x="0" y="8" width="18" height="18" rx="1" fill="#0f78d4" /><text x="9" y="22" fontSize="14" fontWeight="700" fill="#fff" textAnchor="middle">O</text><path d="M15 21h23v16H15z" fill="#eab676" /><path d="M15 21l11.500 10L38 21" fill="none" stroke="#fff" strokeWidth="1.5" /></svg>, false, false],
  [<Chrome><circle cx="9" cy="9" r="10.500" fill="#8e8f6c" /><circle cx="9" cy="6" r="6" fill="#c79a55" /><circle cx="9" cy="6" r="3.500" fill="#f0c8a8" /><path d="M3 17q6-9 12 0-6 4-12 0z" fill="#e6ddd6" /></Chrome>, true, false],
  [<svg width="36" height="34"><path d="M9 1h26v32H9z" fill="#ca64ea" /><path d="M28 9h7v8h-7z" fill="#ae4bd5" /><path d="M28 17h7v8h-7z" fill="#9332bf" /><path d="M28 25h7v8h-7z" fill="#7719aa" /><rect x="0" y="8" width="18" height="18" rx="1" fill="#7719aa" /><text x="9" y="22" fontSize="14" fontWeight="700" fill="#fff" textAnchor="middle">N</text></svg>, false, false],
  [<svg width="40" height="38"><circle cx="30" cy="8" r="4" fill="#5059c9" /><circle cx="19" cy="7" r="5.500" fill="#7b83eb" /><path d="M24 13h12v10q0 6-6 6h-6z" fill="#5059c9" /><path d="M10 13h17v12q0 8-9 8t-8-8z" fill="#7b83eb" /><rect x="0" y="9" width="18" height="18" rx="1" fill="#4b53bc" /><text x="9" y="23" fontSize="14" fontWeight="700" fill="#fff" textAnchor="middle">T</text><circle cx="30" cy="28" r="7.500" fill="#6bb700" stroke="#fff" strokeWidth="1.2" /><path d="M26 28l3 3 5-6" fill="none" stroke="#fff" strokeWidth="1.8" /></svg>, false, false],
  [<svg width="34" height="34"><rect x="1" y="1" width="32" height="31" fill="#261300" stroke="#ff7c00" strokeWidth="2" /><text x="17" y="23" fontSize="18" fill="#ff7c00" textAnchor="middle">Ai</text></svg>, true, false],
  [<svg width="34" height="34"><rect x="1.500" y="1.500" width="31" height="30" rx="4" fill="#001d26" stroke="#31c5f0" strokeWidth="2.5" /><text x="17" y="22" fontSize="17" fontWeight="600" fill="#e8fbff" textAnchor="middle">Ps</text></svg>, true, false],
  [<Chrome><circle cx="9" cy="9" r="11" fill="#455a64" /><text x="9" y="14" fontSize="14" fill="#cfd8dc" textAnchor="middle">P</text></Chrome>, true, false],
  [<RhinoLogo w={36} h={36} />, true, true],
  [<svg width="38" height="34"><rect x="1" y="1" width="36" height="31" rx="2" fill="#b0609a" /><path d="M1 6q0-5 4-5h32v6H1z" fill="#f08068" /><path d="M6 2l4 4M14 2l4 4M22 2l4 4M30 2l4 4" stroke="#7a3040" strokeWidth="2" /><rect x="4" y="8" width="30" height="21" fill="#333" /><path d="M15 11l13 8-13 8z" fill="#fff" /></svg>, true, false],
];

export default function App() {
  return (
    <div className="flex h-[1664px] w-[2496px] flex-col overflow-hidden bg-[#eaebef] font-['Open_Sans','Noto_Sans',sans-serif] text-[17.5px] leading-none tracking-[-0.28px] text-black">
      <svg width="0" height="0" className="absolute">
        <defs>
          <radialGradient id="grayBall" cx=".35" cy=".3" r=".75"><stop offset="0" stopColor="#fff" /><stop offset=".5" stopColor="#bbb" /><stop offset="1" stopColor="#444" /></radialGradient>
          <radialGradient id="blueBall" cx=".35" cy=".3" r=".75"><stop offset="0" stopColor="#cfe2ff" /><stop offset=".3" stopColor="#2c5be0" /><stop offset="1" stopColor="#0a1560" /></radialGradient>
          <radialGradient id="lightBall" cx=".35" cy=".3" r=".8"><stop offset="0" stopColor="#d5e0ff" /><stop offset=".5" stopColor="#7390f0" /><stop offset="1" stopColor="#3450b8" /></radialGradient>
          <radialGradient id="glass"><stop offset="0" stopColor="#fff" /><stop offset="1" stopColor="#dcdfe4" /></radialGradient>
          <linearGradient id="paper" x2="1" y2="1"><stop offset="0" stopColor="#fff" /><stop offset="1" stopColor="#cfcfcf" /></linearGradient>
          <linearGradient id="gold" x2="1" y2="1"><stop offset="0" stopColor="#ffe890" /><stop offset="1" stopColor="#f0a818" /></linearGradient>
          <linearGradient id="fire" x1="0" y1="1" x2="1" y2="0"><stop offset="0" stopColor="#ffc000" /><stop offset=".5" stopColor="#ff7a18" /><stop offset="1" stopColor="#e03c10" /></linearGradient>
        </defs>
      </svg>

      {/* title bar and menu */}
      <div className="flex h-[35px] shrink-0 items-center bg-white">
        <div className="pl-[2px]"><RhinoLogo w={24} h={24} /></div>
        <span className="pl-[5px] tracking-[-0.18px]">Untitled - Rhino 6 Evaluation (83 Days Remaining)</span>
        <svg className="ml-auto mr-[28px]" width="157" height="18" fill="none" stroke="#000" strokeWidth="1.2">
          <path d="M1 8.500h15M70 4.500h11v11H70zM73 4V1.500h11.500v11H82M142 1l15 15M157 1l-15 15" />
        </svg>
      </div>
      <div className="flex h-[27px] shrink-0 items-center bg-white pl-[7px] pt-[1px]">
        {MENU.map(([t, i, w]) => (
          <span key={t} className={w}><Hot t={t} i={i} /></span>
        ))}
      </div>

      {/* command history */}
      <div className="mt-[5px] flex h-[107px] shrink-0 border-l border-[#c2c8dc] pl-[2px] ml-[5px] mr-[2px]">
        <div className="flex flex-1 flex-col border-l border-[#c2c8dc]">
          <div className="flex h-[78px] flex-col border-b border-[#b9bfd4] bg-white pl-[2px] pt-[4px] leading-[25px]">
            <div>1 surface added to selection.</div>
            <div>1 surface added to selection.</div>
            <div>Command: ExtrudeSrf</div>
          </div>
          <div className="flex h-[29px] items-center whitespace-pre bg-white pl-[2px]">
            <b className="tracking-[-0.02px]">Extrusion distance &lt;2&gt;</b>
            <span className="tracking-[0.03px]">
              {" "}( <Hot t="Direction" i={0} />{"  "}<Hot t="BothSides" i={0} />=<i>No</i>{"  "}<Hot t="Solid" i={0} />=<i>Yes</i>{"  "}
              <Hot t="DeleteInput" i={2} />=<i>No</i>{"  "}<Hot t="ToBoundary" i={0} />{"  "}<Hot t="SplitAtTangents" i={1} />=<i>No</i>{"  "}
              <Hot t="SetBasePoint" i={4} /> ):
            </span>
          </div>
        </div>
        <div className="flex w-[24px] flex-col bg-[#f0f0f0]">
          <svg width="24" height="107">
            <rect y="26" width="24" height="26" fill="#cdcdcd" />
            <path d="M7.500 17l5-5 5 5M7.500 62l5 5 5-5" fill="none" stroke="#555" strokeWidth="2.5" />
            <path d="M0 78.500h24" stroke="#b9bfd4" />
            <rect x="1.500" y="80.500" width="22" height="12" fill="#f0f0f0" stroke="#adadad" strokeWidth="1.5" />
            <rect x="1.500" y="93.500" width="22" height="12" fill="#f0f0f0" stroke="#adadad" strokeWidth="1.5" />
            <path d="M8 87l4.500-4.500L17 87zM8 96.500h9l-4.500 4.500z" />
          </svg>
        </div>
      </div>

      {/* toolbar tabs */}
      <div className="mt-[3px] flex h-[34px] shrink-0 items-end border-b border-t border-[#c8cddd] pl-[11px]">
        {TABS.map(([t, w, n], i) => (
          <TopTab key={t} t={t} w={w} n={n} on={i === 0} />
        ))}
        <Settings className="ml-auto mr-[2px] mb-[4px] text-[#a0a0a0]" size={22} strokeWidth={2} />
      </div>
      <div className="flex h-[53px] shrink-0 items-start pl-[9px] pt-[2px]">
        {TOOLBAR.map(([n, tri], i) => (
          <div key={i} className="w-[42.03px]"><Ico tri={tri}>{n}</Ico></div>
        ))}
      </div>

      {/* workspace */}
      <div className="flex h-[1274px] shrink-0">
        <div className="w-[93px] pt-[1px]">
          <div className="mx-[3px] mb-[6px] h-[3px] border-y border-[#c8d0e4]" />
          <div className="grid grid-cols-[42px_42px]">
            {SIDE.map(([n, tri], i) => (
              <div key={i} className="h-[42.02px]"><Ico tri={tri}>{n}</Ico></div>
            ))}
          </div>
        </div>

        <div className="flex w-[2018px] flex-col">
          <div className="grid h-[1241px] grid-cols-[1006px_1006px] grid-rows-[618px_618px] gap-[5px]">
            <Viewport x={94} y={266} w={1005} h={617} label="Top" lw="w-[68px]">
              <Grid box={[94, 266, 1099, 883]} x0={618.8} y0={656.3} step={46.6} skip={5} />
              <path d="M619 266V883" stroke="#3f9a3f" strokeWidth="1.5" />
              <path d={TOP_PATH} fill="none" stroke="#6a6800" strokeWidth="2.6" opacity=".6" />
              <path d={TOP_PATH} fill="none" stroke="#000" strokeWidth="1.4" />
              <path d="M805.500 459V824M696 641.500H873M734 449v7M728 468h5M735 468h5M878 453v12M889 514h6M911 514h6M878 534v6M878 569v6M815 597v5M815 612v5M803 607h5M821 607h6" stroke="#000" strokeWidth="1.1" />
              <circle cx="805.500" cy="641.500" r="4" fill="#fff" stroke="#000" strokeWidth="1.3" />
              <path d="M805.500 637v9M801 641.500h9" stroke="#000" strokeWidth="1" />
              <Gnomon x={148} y={829.5} up="y" right="x" />
            </Viewport>

            <Viewport x={1105} y={266} w={1005} h={617} label="Perspective" lw="w-[133px]" active>
              <path d={minorGrid} stroke="#9399a1" fill="none" />
              <path d={majorGrid} stroke="#86888f" fill="none" strokeWidth="1.1" />
              <path d={segment([0, -70, 0], [0, 70, 0])} stroke="#3f9a3f" strokeWidth="1.8" />
              <path d={WALLS} stroke="#000" strokeWidth="1" fill="none" opacity=".88" />
              <path d={LEVELS[1]} stroke="#000" strokeWidth=".9" fill="none" strokeDasharray="5 1.500" opacity=".85" />
              <path d={LEVELS[0]} stroke="#6a6800" strokeWidth="2.4" fill="none" opacity=".45" />
              <path d={LEVELS[0]} stroke="#000" strokeWidth="1.4" fill="none" />
              <path d={LEVELS[2]} stroke="#000" strokeWidth="2" fill="none" />
              <path d={CROSS} stroke="#000" strokeWidth="1.1" fill="none" />
              <circle cx="1590" cy="713" r="4" fill="#fff" stroke="#333" strokeWidth=".8" />
              <path d="M1159 790V829L1181 810M1159 829l40 12" stroke="#626468" strokeWidth="1.3" fill="none" />
              <g fill="#5f6165" fontSize="21" textAnchor="middle">
                <text x="1168" y="791">z</text><text x="1190" y="809">y</text><text x="1208" y="842">x</text>
              </g>
              <rect x="1592" y="547" width="75" height="29" fill="#555" opacity=".6" />
              <rect x="1589" y="544" width="75" height="29" fill="#fff" stroke="#777" strokeWidth="1" />
              <text x="1626" y="565.500" fontSize="17.5" fill="#5a5a5a" textAnchor="middle">2.000 in</text>
            </Viewport>

            <Viewport x={94} y={889} w={1005} h={617} label="Front" lw="w-[80px]">
              <Grid box={[94, 888, 1099, 1506]} x0={132.3} y0={1201.9} step={57.44} skip={5} />
              <Gnomon x={148} y={1452.5} up="z" right="x" />
            </Viewport>

            <Viewport x={1105} y={889} w={1005} h={617} label="Right" lw="w-[79px]">
              <Grid box={[1105, 888, 2110, 1506]} x0={1607.5} y0={1197.5} step={20} skip={5} />
              <path d="M1607 888V1197" stroke="#3f9a3f" strokeWidth="1.5" />
              <path d="M1607 1197.500H2110" stroke="#a04040" strokeWidth="1.7" />
              <rect x="1622" y="1157" width="183" height="42" />
              <path d="M1645.500 1159v38M1649.500 1159v38M1688.500 1159v38M1692.500 1159v38M1705.500 1159v38M1709.500 1159v38M1714.500 1161v32M1716.500 1161v32M1718.500 1159v38M1800.500 1159v38" stroke="#9da3ab" strokeWidth="1" />
              <path d="M1622 1177.500H1805M1713.500 1151v10" stroke="#000" />
              <rect x="1710.500" y="1154.500" width="6" height="6" fill="#fff" stroke="#000" />
              <path d="M1713.500 1154v7M1710 1157.500h7" stroke="#000" />
              <circle cx="1713.500" cy="1197.500" r="4" fill="#fff" stroke="#222" />
              <Gnomon x={1159.5} y={1452.5} up="z" right="y" />
            </Viewport>
          </div>
          <div className="mt-[3px] flex h-[30px]">
            {([["Perspective", 111, "w-[111px]", "pl-[7px]"], ["Top", 53, "w-[53px]", "pl-[8px]"], ["Front", 66, "w-[66px]", "pl-[9px]"], ["Right", 66, "w-[66px]", "pl-[9px]"], ["+", 44, "w-[44px]", "pl-[2px]"]] as [string, number, string, string][]).map(([t, n, w, pl], i) => (
              <div key={t} className={`relative flex items-center justify-center pb-px ${w} ${pl}`}>
                <svg className="absolute left-0 top-0 overflow-visible" width={n} height="30">
                  <path d={`M0 0V15L9 27q1.500 2.500 4 2.500h${n - 16}q3 0 3-3V0`} fill={i > 0 && i < 4 ? "#d7d7d7" : "#eaebef"} stroke="#c2c8dc" strokeWidth="1.4" />
                </svg>
                {t === "+" ? (
                  <svg className="relative" width="15" height="15" fill="none" stroke="#555"><path d="M5.500 1h4v4.500H14v4H9.500V14h-4V9.500H1v-4h4.500z" /></svg>
                ) : (
                  <span className="relative">{t}</span>
                )}
              </div>
            ))}
          </div>
        </div>

        {/* properties panel */}
        <div className="ml-[8px] flex h-[1272px] w-[376px] flex-col">
          <div className="mt-[3px] h-[3px] border-y border-[#c8d0e4]" />
          <div className="mt-[4px] flex h-[31px]">
            {PANEL_TABS.map(([t, ic, w, n], i) => (
              <div key={t} className={`relative ${w} shrink-0`}>
                <svg className="absolute left-0 top-0 overflow-visible" width={n} height="31">
                  <path d={`M.5 31V5l4-4h${n > 60 ? 37 : n - 20}q3 0 5 2l${n > 60 ? "27 28" : "14 14v14"}z`} fill={i === 0 ? "#eaebef" : "#d7d7d7"} stroke="#c2c8dc" />
                </svg>
                <div className="relative flex h-[34px] items-center gap-[1px] pl-[1px]">
                  <Ico s={30}>{ic}</Ico>
                  <span className="pt-[2px] text-[17px]">{t}</span>
                </div>
              </div>
            ))}
            <Settings className="-ml-[9px] mt-[6px] text-[#b4b4b4]" size={22} strokeWidth={3} />
          </div>
          <div className="flex-1 border border-[#c2c8dc] bg-[#f7f7f9] pl-[4px] pt-[5px]">
            <div className="flex h-[38px] gap-[4px]">
              <div className="flex w-[38px] items-center justify-center border border-[#0a5aa5] bg-[#b9d2ea]">
                <svg width="32" height="28" viewBox="0 0 32 28">
                  <path d="M2 8l9-2 2-4h10l2 4 5 2v16H2z" fill="#25282c" stroke="#111" /><path d="M3 10h5v13H3z" fill="#5a5e63" />
                  <circle cx="19" cy="16" r="9" fill="#111" stroke="#aaa" strokeWidth="1.5" /><circle cx="19" cy="16" r="5" fill="#345" stroke="#888" /><circle cx="18" cy="15" r="2" fill="#6a8" />
                </svg>
              </div>
              <div className="flex w-[38px] items-center justify-center border border-[#adadad] bg-[#e1e1e1]">
                <svg width="36" height="34"><rect x="2" y="2" width="32" height="30" fill="#c8c8c8" stroke="#222" strokeWidth="2" /><rect x="5" y="6" width="26" height="22" fill="#ddd" stroke="#55b8ea" strokeWidth="2.5" /><rect x="7.500" y="9" width="21" height="16" fill="#fff" stroke="#e03a3a" strokeWidth="2" /></svg>
              </div>
              <div className="flex w-[38px] items-center justify-center border border-[#adadad] bg-[#e1e1e1]">
                <Ico s={36}><ellipse cx="-6" cy="17" rx="11" ry="3" fill="#999" stroke="none" /><Ball g="navy" cx={13} cy={-13} r={5.5} /><Ball g="navy" cx={4} cy={-4} r={7} /><Ball g="navy" cx={-8} cy={7} r={10} /></Ico>
              </div>
            </div>
            <div className="mt-[5px] w-[363px] border-l border-t border-r border-[#e8e9ee] text-[17px] tracking-[-0.15px]">
              {GROUPS.map(([g, rows], gi) => (
                <React.Fragment key={g}>
                  <div className={`flex items-center border-b border-[#e8e9ee] pl-[2px] pt-[2px] text-[19.5px] ${gi === 0 ? "h-[37px]" : "h-[38px]"}`}>{g}</div>
                  {rows.map(([l, v], i) => (
                    <div key={i} className="flex h-[31px] items-center border-b border-[#e8e9ee]">
                      <div className="h-full w-[27px]" />
                      <div className="flex h-full w-[155px] items-center whitespace-nowrap border-r border-[#e8e9ee] bg-white pl-[3px] tracking-[-0.2px]">{l}</div>
                      <div className="flex h-full flex-1 items-center bg-white">{v}</div>
                    </div>
                  ))}
                </React.Fragment>
              ))}
            </div>
          </div>
        </div>
      </div>

      {/* object snaps */}
      <div className="flex h-[40px] shrink-0 items-center pl-[5px] pt-[9px]">
        <div className="mr-[6px] h-[29px] w-[3px] border-x border-[#c8cddd]" />
        {OSNAP.map(([t, w], i) => (
          <label key={t} className={`flex items-center gap-[5px] text-[17px] tracking-[-0.3px] ${w}`}>
            <span className={i > 10 ? "h-[18px] w-[18px] border border-[#b5b5b5] bg-[#dedede]" : "h-[20px] w-[20px] border-[1.5px] border-[#333] bg-white"} />
            <span>{t}</span>
          </label>
        ))}
      </div>

      {/* status bar */}
      <div className="flex h-[25px] shrink-0 items-stretch border-t border-[#c2c8dc] text-center leading-[26px] [&>*]:border-r [&>*]:border-[#c2c8dc] [&>*]:whitespace-nowrap">
        <div className="w-[69px] pr-[2px] text-[17px]">CPlane</div>
        <div className="w-[128px]">x 4.012</div>
        <div className="w-[128px]">y 5.305</div>
        <div className="w-[128px]">z 2.000</div>
        <div className="w-[127px]">2.000 in</div>
        <div className="flex w-[247px] items-center gap-[3px] pl-[4px]">
          <span className="h-[17px] w-[17px] bg-black" />Default
        </div>
        {STATUS.map(([t, w, on]) => (
          <div key={t} className={`${w} ${on ? "bg-[#e3f1fc] text-[17.2px] font-bold tracking-[-0.65px]" : ""}`}>{t}</div>
        ))}
        <div className="w-[989px] pl-[2px] text-left tracking-[-0.22px]">Available physical memory: 3580 MB</div>
      </div>

      {/* taskbar */}
      <div className="flex h-[60px] shrink-0 bg-gradient-to-r from-[#0e3c58] to-[#052a52] text-white">
        <div className="flex w-[72px] items-center justify-center">
          <svg width="24" height="24" fill="#fff"><path d="M0 3.500l11-1.500v9.500H0zM12 1.800L24 0v11.500H12zM0 12.500h11V22L0 20.500zM12 12.500h12V24l-12-1.800z" /></svg>
        </div>
        <div className="flex h-[60px] w-[515px] items-center border-2 border-[#55748a] bg-[#345267] pl-[14px]">
          <svg width="28" height="28" fill="none" stroke="#e8eef2" strokeWidth="1.8"><circle cx="17" cy="10" r="8" /><path d="M11.500 16L2 26" /></svg>
          <span className="pl-[16px] pt-[2px] text-[21.5px] tracking-[-0.13px] text-[#d3dce2]">Type here to search</span>
        </div>
        <div className="flex">
          {APPS.map(([ic, open, on], i) => (
            <div key={i} className={`relative flex w-[74.85px] items-center justify-center ${on ? "bg-[#075795]" : ""}`}>
              {ic}
              {open && <span className={`absolute bottom-0 h-[3px] bg-[#90c8f4] ${on ? "inset-x-0" : "inset-x-[7px]"}`} />}
            </div>
          ))}
        </div>
        <svg className="ml-auto" width="340" height="60" viewBox="1969 1 340 60" fill="none" stroke="#e8eef4" strokeWidth="1.6">
          <path d="M1979 34l9-9 9 9" />
          <path d="M2028 38h-1q-4-6 2-9 4-8 11-4 8 2 7 10l-4 4z" fill="#2b8be0" stroke="none" />
          <circle cx="2041" cy="35" r="6.500" fill="#d8202c" stroke="none" /><path d="M2038 32l6 6M2044 32l-6 6" />
          <path d="M2073 23l22-3v20M2073 23v20l12 1M2080 31q4-5 8 0M2088 28v4M2080 36q3 4 7 1" /><circle cx="2090" cy="39" r="5.500" fill="#ff9500" stroke="none" />
          <path d="M2126 26h17v14h-18v-8M2144 30v6" /><path d="M2128 29h5v8h-5z" fill="#fff" /><path d="M2121 24h6v5q-3 4-6 0zM2122 20v4M2126 20v4M2124 31v7" />
          <path d="M2173 43q0-18 17-21M2178 43q0-12 12-15M2183 43q0-8 7-9" strokeWidth="1.300" /><circle cx="2188" cy="41" r="1.800" fill="#fff" stroke="none" />
          <path d="M2217 29h4l6-6v19l-6-6h-4zM2230 29q2 4 0 7M2233 26q4 6 0 13" /><path d="M2236 23q6 9 0 19" opacity=".5" />
          <path d="M2280 38l8-15q3-2 4 1l-8 14-4 3zM2283 31q-11-1-10 6t8 2l3-3M2289 29q6 0 1 4" />
        </svg>
        <div className="ml-[9px] flex w-[92px] flex-col items-center justify-center gap-[10px] whitespace-nowrap text-[18px] tracking-[-0.2px]">
          <span>8:18 PM</span>
          <span>4/14/2020</span>
        </div>
        <svg className="ml-[23px]" width="65" height="60" fill="none">
          <path d="M2 18h24v20H14l-4 5-2-5H2z" fill="#fff" /><path d="M6 24h15M6 28h15M6 32h10" stroke="#0a2e55" strokeWidth="1.5" />
          <path d="M20 30q4 6-4 9 4 4 8 1 4-4 1-8z" fill="#0a2e55" stroke="#fff" strokeWidth="1.5" />
          <path d="M56.500 0v60" stroke="#6a87a5" />
        </svg>
      </div>
    </div>
  );
}
